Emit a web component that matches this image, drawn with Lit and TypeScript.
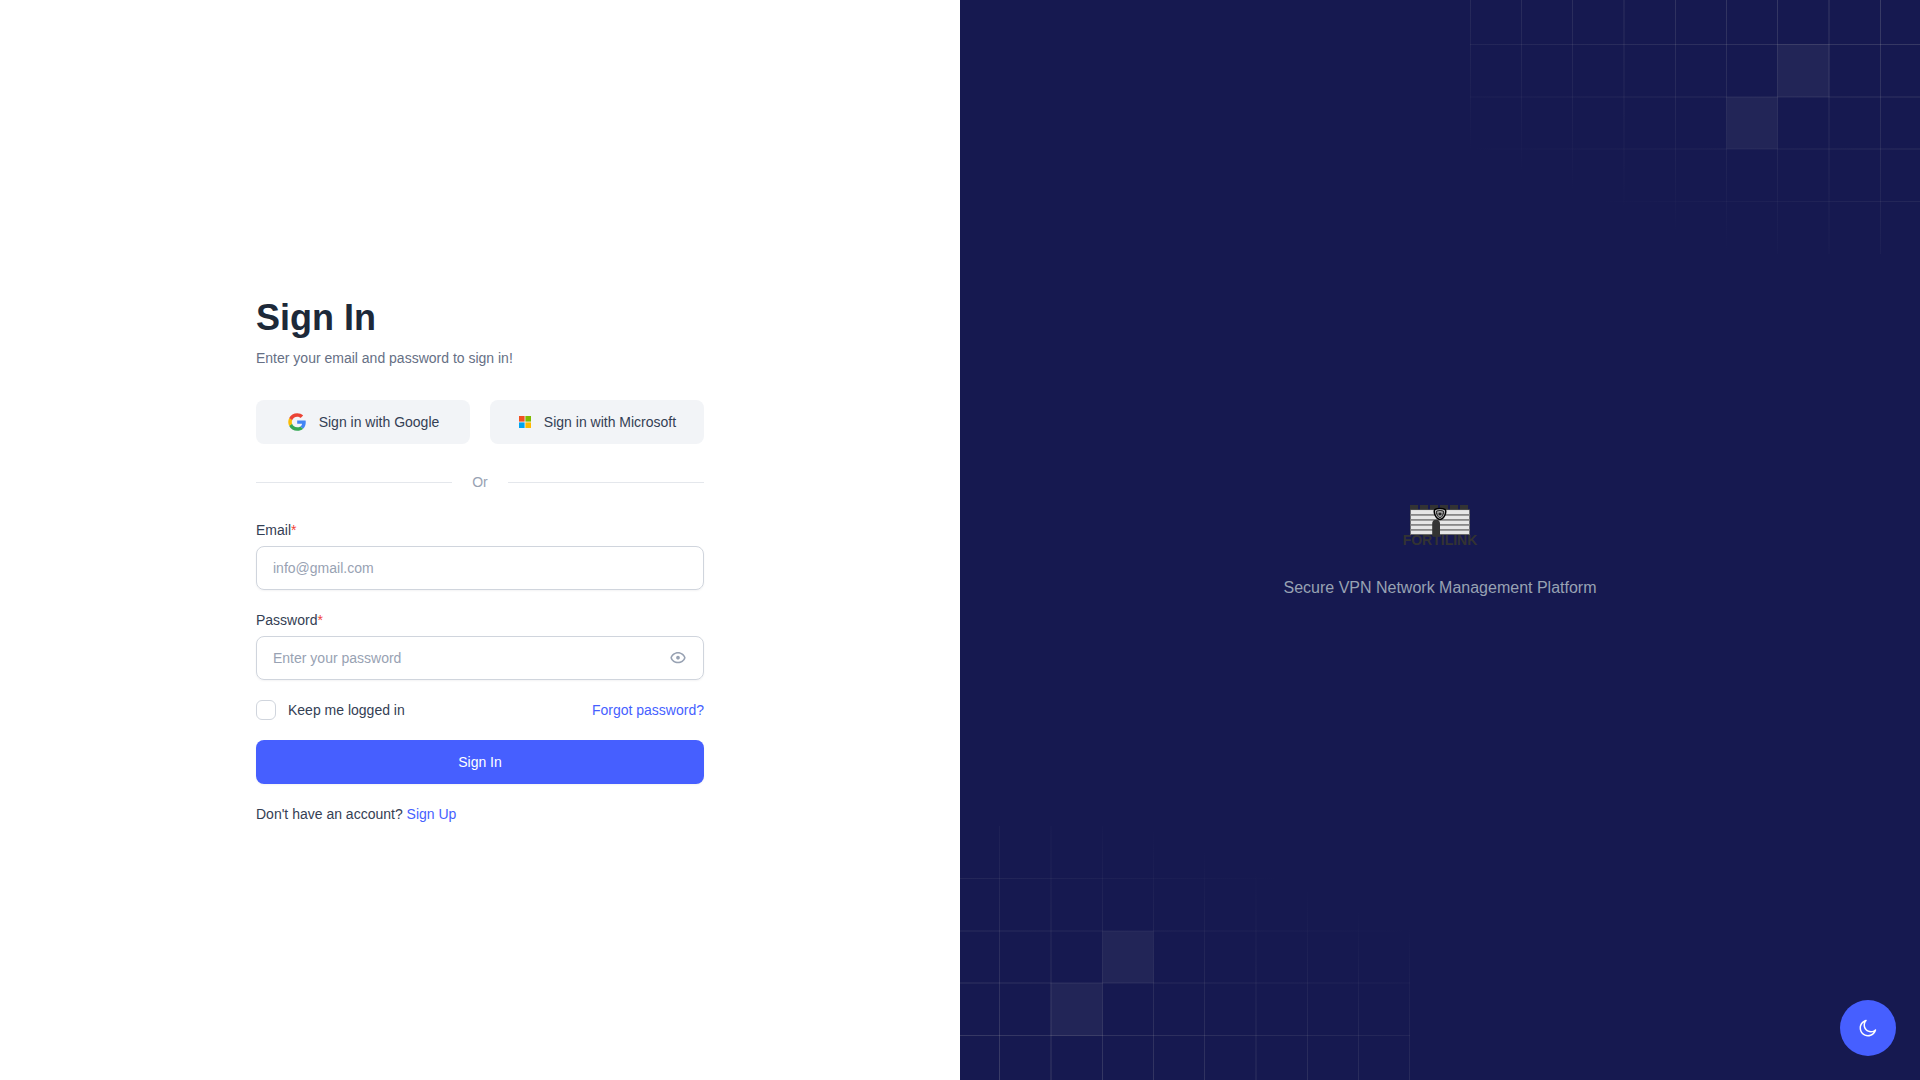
import { LitElement, html, css, svg } from "lit";
import { customElement, state } from "lit/decorators.js";

@customElement("grid-pattern")
class GridPattern extends LitElement {
  static styles = css`
    :host { display: block; }
    .grid { display: block; width: 100%; height: auto; }
  `;
  render() {
    const xs = [0.5, 51.5, 102.5, 154, 205.5, 256.5, 307.5, 359, 410.5];
    const ys = [44.5, 97, 149, 201.5];
    return html`
      <svg class="grid" viewBox="0 0 450 254" fill="none" aria-hidden="true">
        <defs>
          <linearGradient id="fade" gradientUnits="userSpaceOnUse" x1="450" y1="0" x2="340" y2="284">
            <stop offset="0" stop-color="#b2b2b2" stop-opacity="0.24" />
            <stop offset="1" stop-color="#b2b2b2" stop-opacity="0" />
          </linearGradient>
        </defs>
        ${xs.map((x) => svg`<rect x=${x - 0.5} y="0" width="1" height="254" fill="url(#fade)" />`)}
        ${ys.map((y) => svg`<rect x="0" y=${y - 0.5} width="450" height="1" fill="url(#fade)" />`)}
        <rect x="307.5" y="44" width="52" height="53" fill="#b2b2b2" fill-opacity="0.08" />
        <rect x="256.5" y="97" width="51" height="52" fill="#b2b2b2" fill-opacity="0.08" />
      </svg>
    `;
  }
}

@customElement("fortilink-logo")
class FortilinkLogo extends LitElement {
  static styles = css`
    :host { display: block; }
    .logo { display: block; }
    .name { font: bold 14px "Liberation Sans", Arial, sans-serif; }
  `;
  render() {
    return html`
      <svg class="logo" width="80" height="48" viewBox="0 0 80 48" role="img" aria-label="Fortilink">
        ${[10, 20, 30, 40, 50, 60].map((x) => svg`<rect x=${x} y="5" width="8" height="5" fill="#333" />`)}
        <rect x="10.25" y="9.75" width="59.5" height="25" fill="#e6e6e6" stroke="#333" stroke-width="0.6" />
        ${[14, 19, 24, 29].map((y) => svg`<rect x="10.500" y=${y} width="59" height="1.800" fill="#888" />`)}
        <rect x="10" y="34" width="60" height="1" fill="#666" />
        <path d="M32.200 36V23.600a3.900 3.900 0 0 1 7.800 0V36z" fill="#333" />
        <path d="M40 8.600c2.200 0 4.200.300 5.200 1 .700 1 .600 3.200-.200 5.200-1 2.600-2.800 4.600-5 4.600s-4-2-5-4.600c-.800-2-.900-4.200-.200-5.200 1-.700 3-1 5.200-1z" fill="#d4d4d4" stroke="#000" stroke-width="1.500" />
        <path d="M40 10.600c1.600 0 2.900.200 3.600.600.300 1-.100 2.700-.800 4-.700 1.400-1.600 2.300-2.800 2.300s-2.100-.900-2.800-2.300c-.700-1.300-1.100-3-.800-4 .7-.4 2-.6 3.600-.6z" fill="#777" stroke="#000" stroke-width="0.800" />
        <path d="M37.400 12.300q2.600-1.400 5.200 0" fill="none" stroke="#ddd" stroke-width="0.700" />
        <path d="M38.300 15.800q1.700 1 3.400 0" fill="none" stroke="#ddd" stroke-width="0.600" />
        <circle cx="40" cy="14" r="1.300" fill="#222" />
        <text class="name" x="40" y="45" text-anchor="middle" fill="#333">FORTILINK</text>
      </svg>
    `;
  }
}

@customElement("app-root")
class AppRoot extends LitElement {
  @state() private showPassword = false;

  static styles = css`
    :host {
      display: block;
      font-family: "Liberation Sans", Arial, sans-serif;
      font-size: 14px;
      line-height: 20px;
      color: #344054;
    }
    * { box-sizing: border-box; }
    button, input { font: inherit; color: inherit; margin: 0; }
    button { cursor: pointer; border: 0; padding: 0; background: none; }
    a { color: #465fff; text-decoration: none; }
    svg { display: block; }
    .page { display: grid; grid-template-columns: 1fr 1fr; min-height: 100vh; background: #fff; }
    .side { display: flex; flex-direction: column; align-items: center; justify-content: center; padding-top: 40px; }
    .panel { width: 100%; max-width: 448px; }
    .title { margin: 0 0 8px; font-size: 36px; line-height: 44px; font-weight: 700; color: #1d2939; }
    .subtitle { margin: 0 0 32px; color: #667085; }
    .social { display: grid; grid-template-columns: 1fr 1fr; gap: 20px; }
    .social-button {
      display: flex; align-items: center; justify-content: center; gap: 12px;
      height: 44px; border-radius: 8px; background: #f2f4f7;
    }
    .divider { display: flex; align-items: center; gap: 20px; margin: 28px 0; color: #98a2b3; }
    .divider::before, .divider::after { content: ""; flex: 1; height: 1px; background: #e4e7ec; }
    .form { display: flex; flex-direction: column; gap: 20px; }
    .field { display: flex; flex-direction: column; gap: 6px; }
    .required { color: #f04438; }
    .control { position: relative; }
    .input {
      display: block; width: 100%; height: 44px; padding: 0 16px;
      border: 1px solid #d0d5dd; border-radius: 8px; background: transparent;
      box-shadow: 0 1px 2px rgba(16, 24, 40, 0.05); outline: none;
    }
    .input:focus { border-color: #9cb9ff; }
    .input::placeholder { color: #98a2b3; opacity: 1; }
    .with-icon { padding-right: 48px; }
    .reveal { position: absolute; right: 16px; top: 12px; color: #98a2b3; }
    .row { display: flex; align-items: center; justify-content: space-between; }
    .remember { display: flex; align-items: center; gap: 12px; }
    .checkbox { appearance: none; width: 20px; height: 20px; border: 1px solid #d0d5dd; border-radius: 6px; }
    .checkbox:checked { background: #465fff; border-color: #465fff; }
    .submit { height: 44px; border-radius: 8px; background: #465fff; color: #fff; box-shadow: 0 1px 2px rgba(16, 24, 40, 0.05); }
    .signup { margin: 20px 0 0; }
    .brand {
      position: relative; display: flex; flex-direction: column; align-items: center; justify-content: center;
      gap: 28px; padding-top: 20px; background: #161950; overflow: hidden;
    }
    .pattern { position: absolute; width: 450px; max-width: 100%; }
    .pattern-top { right: 0; top: 0; }
    .pattern-bottom { left: 0; bottom: 0; transform: rotate(180deg); }
    .tagline { margin: 0; font-size: 16px; line-height: 24px; color: #98a2b3; }
    .theme {
      position: fixed; right: 24px; bottom: 24px; width: 56px; height: 56px; border-radius: 50%;
      display: flex; align-items: center; justify-content: center; background: #465fff; color: #fff;
    }
  `;

  render() {
    return html`
      <main class="page">
        <section class="side">
          <div class="panel">
            <h1 class="title">Sign In</h1>
            <p class="subtitle">Enter your email and password to sign in!</p>
            <div class="social">
              <button class="social-button" type="button">
                <svg width="20" height="20" viewBox="0 0 20 20" fill="none" aria-hidden="true">
                  <path d="M18.7511 10.1944C18.7511 9.47495 18.6915 8.94995 18.5626 8.40552H10.1797V11.6527H15.1003C15.0011 12.4597 14.4654 13.675 13.2749 14.4916L13.2582 14.6003L15.9087 16.6126L16.0924 16.6305C17.7788 15.1041 18.7511 12.8583 18.7511 10.1944Z" fill="#4285F4" />
                  <path d="M10.1788 18.75C12.5895 18.75 14.6133 17.9722 16.0915 16.6305L13.274 14.4916C12.5201 15.0068 11.5081 15.3666 10.1788 15.3666C7.81773 15.3666 5.81379 13.8402 5.09944 11.7305L4.99473 11.7392L2.23868 13.8295L2.20264 13.9277C3.67087 16.786 6.68674 18.75 10.1788 18.75Z" fill="#34A853" />
                  <path d="M5.10014 11.7305C4.91165 11.186 4.80257 10.6027 4.80257 9.99992C4.80257 9.3971 4.91165 8.81379 5.09022 8.26935L5.08523 8.1534L2.29464 6.02954L2.20333 6.0721C1.5982 7.25823 1.25098 8.5902 1.25098 9.99992C1.25098 11.4096 1.5982 12.7415 2.20333 13.9277L5.10014 11.7305Z" fill="#FBBC05" />
                  <path d="M10.1789 4.63331C11.8554 4.63331 12.9864 5.34303 13.6312 5.93612L16.1511 3.525C14.6035 2.11528 12.5895 1.25 10.1789 1.25C6.68676 1.25 3.67088 3.21387 2.20264 6.07218L5.08953 8.26943C5.81381 6.15972 7.81776 4.63331 10.1789 4.63331Z" fill="#EB4335" />
                </svg>
                Sign in with Google
              </button>
              <button class="social-button" type="button">
                <svg width="14" height="14" viewBox="0 0 14 14" aria-hidden="true">
                  <rect x="1" y="1" width="5.600" height="5.600" fill="#f25022" />
                  <rect x="7.400" y="1" width="5.600" height="5.600" fill="#7fba00" />
                  <rect x="1" y="7.400" width="5.600" height="5.600" fill="#00a4ef" />
                  <rect x="7.400" y="7.400" width="5.600" height="5.600" fill="#ffb900" />
                </svg>
                Sign in with Microsoft
              </button>
            </div>
            <div class="divider">Or</div>
            <form class="form" @submit=${(e: Event) => e.preventDefault()}>
              <div class="field">
                <label for="email">Email<span class="required">*</span></label>
                <input class="input" id="email" type="email" placeholder="info@gmail.com" />
              </div>
              <div class="field">
                <label for="password">Password<span class="required">*</span></label>
                <div class="control">
                  <input class="input with-icon" id="password" type=${this.showPassword ? "text" : "password"} placeholder="Enter your password" />
                  <button class="reveal" type="button" aria-label="Show password" @click=${() => (this.showPassword = !this.showPassword)}>
                    <svg width="20" height="20" viewBox="0 0 20 20" fill="currentColor" aria-hidden="true">
                      <path fill-rule="evenodd" clip-rule="evenodd" d="M10.0002 13.8619C7.23361 13.8619 4.86803 12.1372 3.92328 9.70241C4.86804 7.26761 7.23361 5.54297 10.0002 5.54297C12.7667 5.54297 15.1323 7.26762 16.0771 9.70243C15.1323 12.1372 12.7667 13.8619 10.0002 13.8619ZM10.0002 4.04297C6.48191 4.04297 3.49489 6.30917 2.4155 9.4593C2.3615 9.61687 2.3615 9.78794 2.41549 9.94552C3.49488 13.0957 6.48191 15.3619 10.0002 15.3619C13.5184 15.3619 16.5055 13.0957 17.5849 9.94555C17.6389 9.78797 17.6389 9.6169 17.5849 9.45932C16.5055 6.30919 13.5184 4.04297 10.0002 4.04297ZM9.99151 7.84413C8.96527 7.84413 8.13333 8.67606 8.13333 9.70231C8.13333 10.7286 8.96527 11.5605 9.99151 11.5605H10.0064C11.0326 11.5605 11.8646 10.7286 11.8646 9.70231C11.8646 8.67606 11.0326 7.84413 10.0064 7.84413H9.99151Z" />
                    </svg>
                  </button>
                </div>
              </div>
              <div class="row">
                <label class="remember"><input class="checkbox" type="checkbox" />Keep me logged in</label>
                <a href="#reset">Forgot password?</a>
              </div>
              <button class="submit" type="submit">Sign In</button>
            </form>
            <p class="signup">Don't have an account? <a href="#signup">Sign Up</a></p>
          </div>
        </section>
        <section class="brand">
          <grid-pattern class="pattern pattern-top"></grid-pattern>
          <grid-pattern class="pattern pattern-bottom"></grid-pattern>
          <fortilink-logo></fortilink-logo>
          <p class="tagline">Secure VPN Network Management Platform</p>
        </section>
      </main>
      <button class="theme" type="button" aria-label="Toggle theme">
        <svg width="20" height="20" viewBox="0 0 20 20" fill="currentColor" aria-hidden="true">
          <path d="M17.4547 11.97L18.1799 12.1611C18.265 11.8383 18.1265 11.4982 17.8401 11.3266C17.5538 11.1551 17.1885 11.1934 16.944 11.4207L17.4547 11.97ZM8.0306 2.5459L8.57989 3.05657C8.80718 2.81209 8.84554 2.44682 8.67398 2.16046C8.50243 1.8741 8.16227 1.73559 7.83948 1.82066L8.0306 2.5459ZM12.9154 13.0035C9.64678 13.0035 6.99707 10.3538 6.99707 7.08524H5.49707C5.49707 11.1823 8.81835 14.5035 12.9154 14.5035V13.0035ZM16.944 11.4207C15.8869 12.4035 14.4721 13.0035 12.9154 13.0035V14.5035C14.8657 14.5035 16.6418 13.7499 17.9654 12.5193L16.944 11.4207ZM16.7295 11.7789C15.9437 14.7607 13.2277 16.9586 10.0003 16.9586V18.4586C13.9257 18.4586 17.2249 15.7853 18.1799 12.1611L16.7295 11.7789ZM10.0003 16.9586C6.15734 16.9586 3.04199 13.8433 3.04199 10.0003H1.54199C1.54199 14.6717 5.32892 18.4586 10.0003 18.4586V16.9586ZM3.04199 10.0003C3.04199 6.77289 5.23988 4.05695 8.22173 3.27114L7.83948 1.82066C4.21532 2.77574 1.54199 6.07486 1.54199 10.0003H3.04199ZM6.99707 7.08524C6.99707 5.52854 7.5971 4.11366 8.57989 3.05657L7.48132 2.03522C6.25073 3.35885 5.49707 5.13487 5.49707 7.08524H6.99707Z" />
        </svg>
      </button>
    `;
  }
}
